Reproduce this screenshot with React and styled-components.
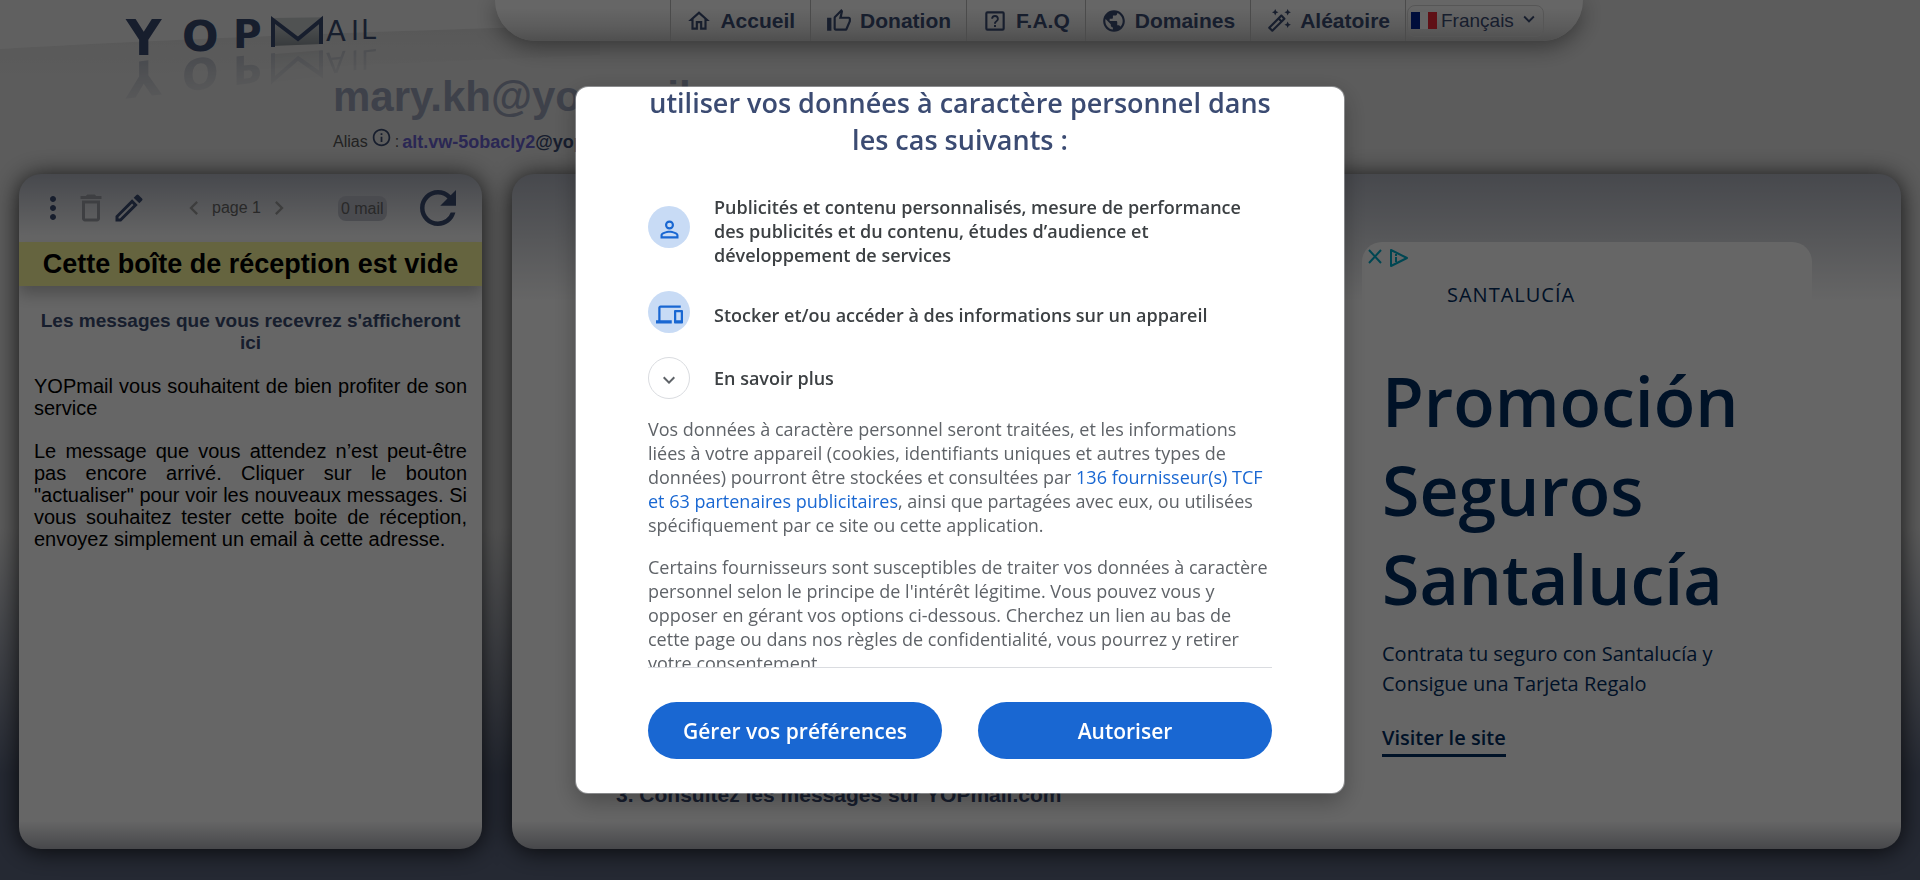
import React from "react";
import styled, { createGlobalStyle } from "styled-components";
import {
  MdOutlineHome,
  MdOutlineThumbUpOffAlt,
  MdPublic,
  MdOutlineAutoFixHigh,
  MdMoreVert,
  MdDeleteOutline,
  MdOutlineModeEdit,
  MdRefresh,
  MdChevronLeft,
  MdChevronRight,
  MdInfoOutline,
  MdPersonOutline,
  MdOutlineDevices,
  MdExpandMore,
} from "react-icons/md";

const navy = "#3b4b72";
const adNavy = "#002d62";
const sans = `"Liberation Sans", Arial, sans-serif`;
const open = `"Open Sans", "Noto Sans", sans-serif`;

const GlobalStyle = createGlobalStyle`
  *, *::before, *::after { box-sizing: border-box; }
  body { margin: 0; font-family: ${sans}; background: #5d6780; }
  h1, h2, h3, p, ul { margin: 0; padding: 0; }
  button { font: inherit; border: 0; padding: 0; background: none; color: inherit; cursor: pointer; }
  a { color: inherit; text-decoration: none; }
  svg { display: block; flex: none; }
`;

const Page = styled.div`
  min-height: 100vh;
  display: flex;
  flex-direction: column;
  position: relative;
  background: linear-gradient(180deg, #e6e6e6 60%, #5d6780 88%);
`;

const Wave = styled.svg`
  position: absolute;
  top: 0;
  left: 0;
`;

const Header = styled.header`
  display: flex;
  min-height: 174px;
  position: relative;
`;

const LogoLink = styled.a`
  flex: none;
  width: 333px;
  padding-left: 50px;
`;

const HeaderMain = styled.div`
  flex: 1;
  min-width: 0;
`;

const NavBar = styled.nav`
  display: flex;
  align-items: center;
  justify-content: flex-end;
  height: 41px;
  margin: 0 337px 0 162px;
  padding-right: 39px;
  border-radius: 0 0 50px 50px;
  background: linear-gradient(180deg, #fff 20%, #e6e6e6 65%, #c6c6c6);
  box-shadow: 0 6px 22px rgba(0, 0, 0, 0.4);
  color: ${navy};
`;

const NavItem = styled.a`
  display: flex;
  align-items: center;
  gap: 8px;
  height: 41px;
  padding: 0 15px;
  border-left: 1px solid #bbb;
  font-size: 21px;
  font-weight: bold;
`;

const LanguageSlot = styled.div`
  display: flex;
  align-items: center;
  height: 41px;
  border-left: 1px solid #bbb;
`;

const Language = styled.label`
  display: flex;
  align-items: center;
  gap: 4px;
  height: 32px;
  width: 137px;
  margin-left: 1px;
  padding: 0 3px;
  border: 1px solid #d8d8d8;
  border-radius: 8px;
`;

const LanguageSelect = styled.select`
  appearance: none;
  flex: 1;
  min-width: 0;
  border: 0;
  padding: 0;
  background: none;
  color: ${navy};
  font-family: ${sans};
  font-size: 19px;
`;

const Caret = styled(MdExpandMore)`
  color: ${navy};
  margin-bottom: 4px;
`;

const Address = styled.h1`
  padding-top: 32px;
  font-size: 42px;
  line-height: 48px;
  color: #9ba3b9;
`;

const Alias = styled.p`
  display: flex;
  align-items: center;
  gap: 3px;
  padding-top: 6px;
  font-size: 16px;
  line-height: 24px;
  color: #555;
  svg { color: ${navy}; margin-bottom: 8px; }
`;

const AliasLink = styled.a`
  font-size: 18px;
  font-weight: bold;
  color: #6a62d0;
  span { color: ${navy}; }
`;

const Columns = styled.main`
  flex: 1;
  display: flex;
  gap: 30px;
  padding: 0 19px 31px;
`;

const Panel = styled.section`
  display: flex;
  flex-direction: column;
  border-radius: 22px;
  overflow: hidden;
  box-shadow: 0 2px 24px rgba(0, 0, 0, 0.8);
  background:
    linear-gradient(180deg, #b1b5c0, rgba(255, 255, 255, 0) ${(p) => p.$head}) no-repeat,
    linear-gradient(0deg, #b1b3ba, rgba(255, 255, 255, 0) 28px) no-repeat,
    #fff;
`;

const Inbox = styled(Panel)`
  flex: none;
  width: 463px;
`;

const Reader = styled(Panel)`
  flex: 1;
  flex-direction: row;
  justify-content: space-between;
  padding: 68px 89px 0 104px;
`;

const Toolbar = styled.div`
  display: flex;
  align-items: center;
  height: 68px;
  padding: 0 17px 0 16px;
  color: ${navy};
`;

const ToolGroup = styled.div`
  display: flex;
  gap: 2px;
`;

const Pager = styled.div`
  display: flex;
  align-items: center;
  gap: 4px;
  margin-left: 33px;
  font-size: 16px;
  color: #666;
  button { color: #9a9a9a; }
`;

const IconButton = styled.button`
  color: ${(p) => (p.$muted ? "#9c9fa5" : "inherit")};
`;

const Count = styled.span`
  margin: 0 auto 0 45px;
  padding: 0 3px;
  border-radius: 8px;
  background: #b9bcc6;
  font-size: 16px;
  line-height: 25px;
  color: #666;
`;

const EmptyBanner = styled.h2`
  background: #fcfa9e;
  color: #000;
  font-size: 27px;
  line-height: 44px;
  text-align: center;
  box-shadow: 0 8px 16px rgba(0, 0, 0, 0.25);
`;

const InboxText = styled.div`
  display: flex;
  flex-direction: column;
  gap: 21px;
  padding: 24px 15px;
  font-size: 20px;
  line-height: 22px;
  text-align: justify;
  color: #000;
`;

const InboxLead = styled.h3`
  font-size: 19px;
  text-align: center;
  color: ${navy};
`;

const Steps = styled.div`
  align-self: flex-end;
  padding-bottom: 42px;
`;

const StepTitle = styled.h2`
  font-size: 21px;
  line-height: 24px;
  color: ${navy};
`;

const Ad = styled.aside`
  display: flex;
  flex-direction: column;
  align-items: flex-start;
  align-self: flex-start;
  width: 450px;
  padding: 7px 20px 30px;
  border-radius: 20px;
  background: #fff;
  font-family: ${open};
  color: ${adNavy};
`;

const AdChoices = styled.div`
  display: flex;
  gap: 8px;
  margin-left: -14px;
`;

const AdBrand = styled.p`
  margin: 13px 0 0 65px;
  font-size: 20px;
  line-height: 30px;
  letter-spacing: 1px;
`;

const AdTitle = styled.h2`
  margin-top: 46px;
  font-size: 68px;
  font-weight: 600;
  line-height: 89px;
`;

const AdText = styled.p`
  margin-top: 16px;
  font-size: 20px;
  line-height: 30px;
`;

const AdLink = styled.a`
  margin-top: 23px;
  border-bottom: 3px solid ${adNavy};
  font-size: 20px;
  font-weight: 600;
  line-height: 32px;
`;

const Overlay = styled.div`
  position: fixed;
  inset: 0;
  display: flex;
  align-items: center;
  justify-content: center;
  background: rgba(0, 0, 0, 0.6);
`;

const Dialog = styled.div`
  display: flex;
  flex-direction: column;
  width: 768px;
  height: calc(80vh + 2px);
  border-radius: 12px;
  overflow: hidden;
  background: #fff;
  box-shadow: 0 0 0 1px rgba(218, 220, 224, 0.4), 0 8px 24px rgba(0, 0, 0, 0.3);
  font-family: ${open};
  color: #3c4043;
`;

const DialogScroll = styled.div`
  flex: 1;
  min-height: 0;
  margin: 0 72px;
  overflow: hidden;
  border-bottom: 1px solid #dadce0;
`;

const DialogBody = styled.div`
  margin-top: -3px;
`;

const DialogTitle = styled.h2`
  margin-bottom: 37px;
  text-align: center;
  font-size: 27px;
  font-weight: 600;
  line-height: 37px;
  color: ${navy};
`;

const Purposes = styled.ul`
  display: flex;
  flex-direction: column;
  gap: 24px;
  list-style: none;
`;

const Purpose = styled.li`
  display: flex;
  align-items: flex-start;
  gap: 24px;
  font-size: 18px;
  font-weight: 600;
  line-height: 24px;
`;

const PurposeIcon = styled.span`
  flex: none;
  display: flex;
  align-items: center;
  justify-content: center;
  width: 42px;
  height: 42px;
  margin-top: ${(p) => (p.$multiline ? "11px" : "0")};
  padding-top: 5px;
  border-radius: 50%;
  background: #c8dbf5;
  color: #1967d2;
`;

const PurposeText = styled.span`
  padding-top: ${(p) => (p.$multiline ? "0" : "12px")};
`;

const MoreButton = styled.button`
  display: flex;
  align-items: center;
  gap: 24px;
  margin-top: 24px;
  font-size: 18px;
  font-weight: 600;
  line-height: 24px;
`;

const MoreIcon = styled.span`
  display: flex;
  align-items: center;
  justify-content: center;
  width: 42px;
  height: 42px;
  padding-top: 3px;
  border: 1px solid #dadce0;
  border-radius: 50%;
  color: #5f6368;
`;

const Legal = styled.p`
  margin-top: 18px;
  font-size: 18px;
  line-height: 24px;
  color: #5f6368;
  a { color: #1967d2; font-weight: 500; }
`;

const Actions = styled.div`
  display: flex;
  gap: 36px;
  padding: 34px 72px;
`;

const ActionButton = styled.button`
  flex: 1;
  height: 57px;
  border-radius: 29px;
  background: #1967d2;
  color: #fff;
  font-family: ${open};
  font-size: 21px;
  font-weight: 600;
`;

const LogoLetters = () => (
  <>
    <g fill={navy} fontFamily="DejaVu Sans" fontWeight="bold">
      <text x="76" y="55" fontSize="49">Y</text>
      <text x="132" y="51" fontSize="43">O</text>
      <text x="183" y="48" fontSize="39">P</text>
    </g>
    <path d="M222 18L272 17V44L222 46Z" fill="url(#envelope)" />
    <path d="M222 18L247 39L272 18Z" fill="#c9cccd" />
    <path d="M223 47V20L248 39L271 20V44" fill="none" stroke={navy} strokeWidth="4" />
    <g fill={navy} fontFamily="DejaVu Sans">
      <text x="276" y="41" fontSize="29">A</text>
      <text x="301" y="40" fontSize="27">I</text>
      <text x="311" y="39" fontSize="27">L</text>
    </g>
  </>
);

const Logo = () => (
  <svg width="283" height="110" viewBox="0 0 283 110" role="img" aria-label="YOPmail" overflow="visible">
    <defs>
      <linearGradient id="envelope" x1="0" y1="0" x2="0" y2="1">
        <stop offset="0" stopColor="#d5d8da" />
        <stop offset="1" stopColor="#8b9398" />
      </linearGradient>
      <linearGradient id="fade" x1="0" y1="0" x2="0" y2="1">
        <stop offset="0.2" stopColor="#fff" stopOpacity="0.05" />
        <stop offset="1" stopColor="#fff" stopOpacity="0.4" />
      </linearGradient>
      <mask id="mirror" maskUnits="userSpaceOnUse" x="0" y="0" width="340" height="60">
        <rect width="340" height="60" fill="url(#fade)" />
      </mask>
    </defs>
    <LogoLetters />
    <g transform="matrix(1 -0.12 0 -1 0 127)" opacity="0.7">
      <g mask="url(#mirror)">
        <LogoLetters />
      </g>
    </g>
  </svg>
);

const HelpBox = () => (
  <svg width="26" height="26" viewBox="0 0 24 24" fill="currentColor">
    <path d="M19 3H5a2 2 0 0 0-2 2v14a2 2 0 0 0 2 2h14a2 2 0 0 0 2-2V5a2 2 0 0 0-2-2m0 16H5V5h14zM12 6.5A3.5 3.5 0 0 0 8.5 10H10.2A1.8 1.8 0 0 1 12 8.2 1.8 1.8 0 0 1 13.8 10C13.8 11.8 11.1 12 11.1 14.500H12.900C12.900 12.800 15.500 12.500 15.500 10A3.500 3.500 0 0 0 12 6.500M11.100 15.800H12.900V17.600H11.100Z" />
  </svg>
);

const Flag = () => (
  <svg width="26" height="17" viewBox="0 0 26 17">
    <rect width="9" height="17" fill="#002395" />
    <rect x="9" width="8" height="17" fill="#fff" />
    <rect x="17" width="9" height="17" fill="#ed2939" />
  </svg>
);

const navItems = [
  { label: "Accueil", icon: <MdOutlineHome size={26} /> },
  { label: "Donation", icon: <MdOutlineThumbUpOffAlt size={26} /> },
  { label: "F.A.Q", icon: <HelpBox /> },
  { label: "Domaines", icon: <MdPublic size={26} /> },
  { label: "Aléatoire", icon: <MdOutlineAutoFixHigh size={26} /> },
];

export default function App() {
  return (
    <>
      <GlobalStyle />
      <Page>
        <Wave width="600" height="90" viewBox="0 0 600 90" aria-hidden="true">
          <defs>
            <linearGradient id="wave" x1="0" y1="0" x2="0" y2="1">
              <stop offset="0" stopColor="#dcdcdc" />
              <stop offset="1" stopColor="#e6e6e6" />
            </linearGradient>
          </defs>
          <path d="M0 49Q240 35 600 25V55L0 80Z" fill="url(#wave)" />
          <path d="M0 0H600V25Q240 35 0 49Z" fill="#f0f0f0" />
        </Wave>
        <Header>
          <LogoLink href="#"><Logo /></LogoLink>
          <HeaderMain>
            <NavBar>
              {navItems.map((item) => (
                <NavItem href="#" key={item.label}>
                  {item.icon}
                  {item.label}
                </NavItem>
              ))}
              <LanguageSlot>
                <Language>
                  <Flag />
                  <LanguageSelect aria-label="Langue" defaultValue="fr">
                    <option value="fr">Français</option>
                  </LanguageSelect>
                  <Caret size={22} />
                </Language>
              </LanguageSlot>
            </NavBar>
            <Address>mary.kh@yopmail.com</Address>
            <Alias>
              Alias
              <MdInfoOutline size={21} />
              <span>:</span>
              <AliasLink href="#">alt.vw-5obacly2<span>@yopmail.com</span></AliasLink>
            </Alias>
          </HeaderMain>
        </Header>

        <Columns>
          <Inbox $head="66px">
            <Toolbar>
              <ToolGroup>
                <IconButton aria-label="Menu"><MdMoreVert size={36} /></IconButton>
                <IconButton aria-label="Supprimer" $muted><MdDeleteOutline size={36} /></IconButton>
                <IconButton aria-label="Écrire"><MdOutlineModeEdit size={36} /></IconButton>
              </ToolGroup>
              <Pager>
                <button aria-label="Page précédente"><MdChevronLeft size={28} /></button>
                page 1
                <button aria-label="Page suivante"><MdChevronRight size={28} /></button>
              </Pager>
              <Count>0 mail</Count>
              <IconButton aria-label="Actualiser"><MdRefresh size={54} /></IconButton>
            </Toolbar>
            <EmptyBanner>Cette boîte de réception est vide</EmptyBanner>
            <InboxText>
              <InboxLead>Les messages que vous recevrez s'afficheront ici</InboxLead>
              <p>YOPmail vous souhaitent de bien profiter de son service</p>
              <p>
                Le message que vous attendez n’est peut-être pas encore arrivé. Cliquer sur le bouton
                "actualiser" pour voir les nouveaux messages. Si vous souhaitez tester cette boite de
                réception, envoyez simplement un email à cette adresse.
              </p>
            </InboxText>
          </Inbox>

          <Reader $head="128px">
            <Steps>
              <StepTitle>3. Consultez les messages sur YOPmail.com</StepTitle>
            </Steps>
            <Ad>
              <AdChoices>
                <svg width="14" height="15" viewBox="0 0 14 15" stroke="#00aecd" strokeWidth="2" fill="none">
                  <path d="M1 1L13 14M13 1L1 14" />
                </svg>
                <svg width="18" height="18" viewBox="0 0 18 18" stroke="#00aecd" strokeWidth="2" fill="none">
                  <path d="M1 1V17L17 9Z" strokeLinejoin="round" />
                  <path d="M6 8V13M6 5V7" />
                </svg>
              </AdChoices>
              <AdBrand>SANTALUCÍA</AdBrand>
              <AdTitle>Promoción<br />Seguros<br />Santalucía</AdTitle>
              <AdText>Contrata tu seguro con Santalucía y<br />Consigue una Tarjeta Regalo</AdText>
              <AdLink href="#">Visiter le site</AdLink>
            </Ad>
          </Reader>
        </Columns>
      </Page>

      <Overlay>
        <Dialog role="dialog" aria-modal="true" aria-labelledby="consent-title">
          <DialogScroll>
            <DialogBody>
              <DialogTitle id="consent-title">
                utiliser vos données à caractère personnel dans les cas suivants :
              </DialogTitle>
              <Purposes>
                <Purpose>
                  <PurposeIcon $multiline><MdPersonOutline size={27} /></PurposeIcon>
                  <PurposeText $multiline>
                    Publicités et contenu personnalisés, mesure de performance des publicités et du
                    contenu, études d’audience et développement de services
                  </PurposeText>
                </Purpose>
                <Purpose>
                  <PurposeIcon><MdOutlineDevices size={27} /></PurposeIcon>
                  <PurposeText>Stocker et/ou accéder à des informations sur un appareil</PurposeText>
                </Purpose>
              </Purposes>
              <MoreButton aria-expanded="false">
                <MoreIcon><MdExpandMore size={24} /></MoreIcon>
                En savoir plus
              </MoreButton>
              <Legal>
                Vos données à caractère personnel seront traitées, et les informations liées à votre
                appareil (cookies, identifiants uniques et autres types de données) pourront être
                stockées et consultées par{" "}
                <a href="#">136 fournisseur(s) TCF et 63 partenaires publicitaires</a>, ainsi que
                partagées avec eux, ou utilisées spécifiquement par ce site ou cette application.
              </Legal>
              <Legal>
                Certains fournisseurs sont susceptibles de traiter vos données à caractère personnel
                selon le principe de l'intérêt légitime. Vous pouvez vous y opposer en gérant vos
                options ci-dessous. Cherchez un lien au bas de cette page ou dans nos règles de
                confidentialité, vous pourrez y retirer votre consentement.
              </Legal>
            </DialogBody>
          </DialogScroll>
          <Actions>
            <ActionButton>Gérer vos préférences</ActionButton>
            <ActionButton>Autoriser</ActionButton>
          </Actions>
        </Dialog>
      </Overlay>
    </>
  );
}
